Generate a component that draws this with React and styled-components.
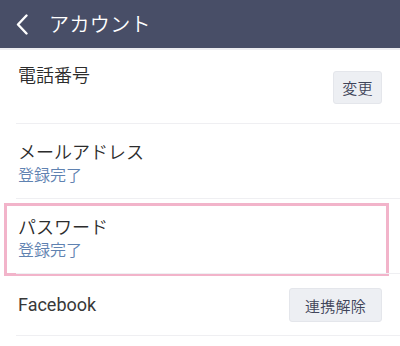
import React from "react";
import styled, { createGlobalStyle } from "styled-components";

const Global = createGlobalStyle`
  html, body { margin: 0; padding: 0; background: #ffffff; }
  body { font-family: "Roboto", "Noto Sans CJK JP", sans-serif; }
`;

const Page = styled.div`
  width: 400px;
  height: 346px;
  overflow: hidden;
  background: #ffffff;
`;

const Header = styled.header`
  height: 48px;
  display: flex;
  align-items: center;
  padding-left: 16px;
  background: #484e67;
  border-bottom: 2px solid #ededf1;
`;

const BackButton = styled.div`
  width: 12px;
  height: 21px;
  display: flex;
  align-items: center;
  justify-content: center;
`;

const HeaderTitle = styled.h1`
  margin: 0 0 0 21px;
  font-family: "Noto Sans CJK JP", sans-serif;
  font-size: 20px;
  font-weight: 350;
  line-height: 28px;
  color: #ffffff;
  letter-spacing: 0.4px;
`;

const List = styled.div`
  display: flex;
  flex-direction: column;
`;

const Row = styled.div`
  position: relative;
  display: flex;
  justify-content: space-between;
  align-items: ${(p) => (p.$top ? "flex-start" : "center")};
  height: ${(p) => p.$h}px;
  box-sizing: border-box;
  padding: ${(p) => (p.$top ? "12px" : "0")} 18px 0 18px;
  &::after {
    content: "";
    position: absolute;
    left: 16px;
    right: 0;
    bottom: 0;
    height: 1px;
    background: #efeff2;
  }
`;

const Info = styled.div`
  display: flex;
  flex-direction: column;
`;

const Label = styled.div`
  font-family: "Noto Sans CJK JP", sans-serif;
  font-size: 18px;
  font-weight: 350;
  line-height: 24px;
  color: #2c2c2c;
`;

const LatinLabel = styled(Label)`
  font-family: "Roboto", sans-serif;
  font-size: 18px;
  font-weight: 400;
  color: #383838;
`;

const Status = styled.div`
  font-family: "Noto Sans CJK JP", sans-serif;
  font-size: 16px;
  font-weight: 350;
  line-height: 22px;
  color: #5f82b1;
`;

const ActionButton = styled.button`
  align-self: center;
  height: ${(p) => p.$h}px;
  width: ${(p) => p.$w}px;
  margin-top: ${(p) => p.$mt || 0}px;
  padding: 0;
  border: 1px solid #e4e6eb;
  border-radius: 3px;
  background: #edeff3;
  font-family: "Noto Sans CJK JP", sans-serif;
  font-size: 15px;
  font-weight: 350;
  color: #3f4459;
  letter-spacing: 0.3px;
`;

const Highlight = styled.div`
  position: absolute;
  left: 4px;
  right: 11px;
  top: 4px;
  height: 73px;
  box-sizing: border-box;
  border: 3px solid #f2b4ca;
  pointer-events: none;
`;

export default function App() {
  return (
    <Page>
      <Global />
      <Header>
        <BackButton>
          <svg width="12" height="21" viewBox="0 0 12 21">
            <polyline
              points="10.5,1.5 2,10.5 10.5,19.5"
              fill="none"
              stroke="#ffffff"
              strokeWidth="2.4"
              strokeLinecap="round"
              strokeLinejoin="round"
            />
          </svg>
        </BackButton>
        <HeaderTitle>アカウント</HeaderTitle>
      </Header>
      <List>
        <Row $h={74} $top>
          <Info>
            <Label>電話番号</Label>
          </Info>
          <ActionButton $h={33} $w={49} $mt={-12}>変更</ActionButton>
        </Row>
        <Row $h={75}>
          <Info>
            <Label>メールアドレス</Label>
            <Status>登録完了</Status>
          </Info>
        </Row>
        <Row $h={75}>
          <Info>
            <Label>パスワード</Label>
            <Status>登録完了</Status>
          </Info>
          <Highlight />
        </Row>
        <Row $h={62}>
          <Info>
            <LatinLabel>Facebook</LatinLabel>
          </Info>
          <ActionButton $h={34} $w={93}>連携解除</ActionButton>
        </Row>
      </List>
    </Page>
  );
}
